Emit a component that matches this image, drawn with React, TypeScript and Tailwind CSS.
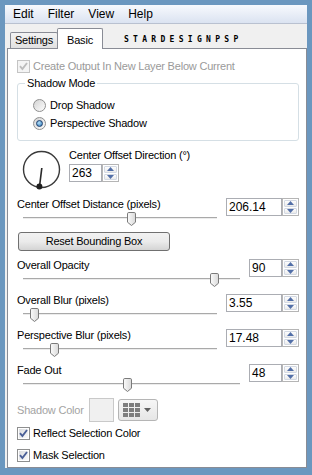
import React from "react";

type SliderRow = {
  label: string;
  value: string;
  pos: number;
  narrow?: boolean;
  gap: string;
};

const rows: SliderRow[] = [
  { label: "Overall Opacity", value: "90", pos: 0.91, narrow: true, gap: "mt-[7px]" },
  { label: "Overall Blur (pixels)", value: "3.55", pos: 0.035, gap: "mt-[7px]" },
  { label: "Perspective Blur (pixels)", value: "17.48", pos: 0.145, gap: "mt-[7px]" },
  { label: "Fade Out", value: "48", pos: 0.485, narrow: true, gap: "mt-[7px]" },
];

function CheckBox({ disabled }: { disabled?: boolean }) {
  return (
    <span
      className={`flex h-[13px] w-[13px] shrink-0 items-center justify-center border p-[1px] ${
        disabled ? "border-[#c4c4c4] bg-[#f4f4f4]" : "border-[#8e8f8f] bg-white"
      }`}
    >
      <span
        className={`flex h-full w-full items-center justify-center ${
          disabled ? "bg-[#f4f4f4]" : "bg-gradient-to-br from-[#d9dbde] to-[#fbfbfb]"
        }`}
      >
        <svg width="9" height="9" viewBox="0 0 9 9">
          <path
            d="M1 4.2 L3.4 7 L8 1"
            stroke={disabled ? "#bcbcbc" : "#4a5f97"}
            strokeWidth="1.9"
            fill="none"
          />
        </svg>
      </span>
    </span>
  );
}

function Radio({ checked }: { checked?: boolean }) {
  return (
    <span className="flex h-[13px] w-[13px] shrink-0 items-center justify-center rounded-full border border-[#8f8f8f] bg-gradient-to-br from-[#d4d4d4] to-[#fdfdfd]">
      {checked && (
        <span className="h-[7px] w-[7px] rounded-full border border-[#1d3f6e] bg-[radial-gradient(circle_at_40%_35%,#b5e2fb,#2a74b4)]" />
      )}
    </span>
  );
}

function Spin() {
  return (
    <div className="flex w-[17px] flex-col gap-[1px] border border-[#b5b5b5] bg-white p-[1px]">
      <div className="flex flex-1 items-center justify-center rounded-[1px] border border-[#d3d9e3] bg-gradient-to-b from-[#fdfdfd] to-[#ebebeb]">
        <svg width="7" height="4" viewBox="0 0 7 4">
          <path d="M0 4 L3.5 0 L7 4Z" fill="#526fa8" />
        </svg>
      </div>
      <div className="flex flex-1 items-center justify-center rounded-[1px] border border-[#d3d9e3] bg-gradient-to-b from-[#fdfdfd] to-[#ebebeb]">
        <svg width="7" height="4" viewBox="0 0 7 4">
          <path d="M0 0 L3.5 4 L7 0Z" fill="#526fa8" />
        </svg>
      </div>
    </div>
  );
}

function NumBox({ value, narrow }: { value: string; narrow?: boolean }) {
  return (
    <div className="flex h-[18px]">
      <div
        className={`flex items-center border border-[#abadb3] bg-white pl-[2px] text-[12px] tracking-normal text-black ${
          narrow ? "w-[33px]" : "w-[56px]"
        }`}
      >
        {value}
      </div>
      <Spin />
    </div>
  );
}

function Thumb() {
  return (
    <svg width="9" height="14" viewBox="0 0 9 14">
      <defs>
        <linearGradient id="thumbfill" x1="0" y1="0" x2="1" y2="0">
          <stop offset="0" stopColor="#fbfbfb" />
          <stop offset="1" stopColor="#d9d9d9" />
        </linearGradient>
      </defs>
      <path
        d="M1.8 0.5 H7.2 Q8.5 0.5 8.5 1.8 V10.2 L4.5 13.5 L0.5 10.2 V1.8 Q0.5 0.5 1.8 0.5Z"
        fill="url(#thumbfill)"
        stroke="#7a7a7a"
      />
    </svg>
  );
}

function Slider({ pos }: { pos: number }) {
  return (
    <div className="relative h-[14px] pl-[6px] pr-[9px]">
      <div className="mt-[6px] h-[2px] border-t border-b border-t-[#a9a9a9] border-b-[#ececec]" />
      <div className="absolute top-[1px]" style={{ left: 6 + pos * 187 }}>
        <Thumb />
      </div>
    </div>
  );
}

function Control({ label, value, pos, narrow, gap }: SliderRow) {
  return (
    <div className={`ml-[9px] flex w-[282px] ${gap}`}>
      <div className="flex flex-1 flex-col">
        <div className="flex h-[14px] items-center">{label}</div>
        <Slider pos={narrow ? pos * 1.1 : pos} />
      </div>
      <div className="mt-[1px]">
        <NumBox value={value} narrow={narrow} />
      </div>
    </div>
  );
}

function Dial() {
  return (
    <svg width="40" height="40" viewBox="0 0 40 40" className="mt-[2px] shrink-0">
      <circle cx="19.5" cy="19.5" r="18" fill="none" stroke="#3a3a3a" strokeWidth="1.4" />
      <line x1="19.8" y1="18" x2="17.5" y2="36.5" stroke="#2a2a2a" strokeWidth="1.6" />
      <circle cx="17.4" cy="36.6" r="3" fill="#1f1f1f" />
    </svg>
  );
}

function GridIcon() {
  return (
    <svg width="17" height="14" viewBox="0 0 17 14">
      {[0, 1, 2].map((r) =>
        [0, 1, 2].map((c) => (
          <rect key={`${r}-${c}`} x={c * 6} y={r * 5} width="5" height="4" fill="#7d7d7d" />
        ))
      )}
    </svg>
  );
}

export default function App() {
  return (
    <div className="h-[475px] w-[312px] bg-[#6b97bf] pb-[7px] pl-[5px] pr-[5px] pt-[5px] font-['Liberation_Sans',Arial,sans-serif] text-[11px] tracking-[-0.2px] text-black">
      <div className="flex h-full flex-col bg-[#f0f0f0]">
        {/* menu */}
        <div className="flex h-[19px] items-center border-b border-[#b9c1d0] bg-gradient-to-b from-[#f7f9fd] to-[#dbe3f1] pl-[1px] text-[12px] tracking-normal">
          <span className="px-[7px]">Edit</span>
          <span className="px-[7px]">Filter</span>
          <span className="px-[7px]">View</span>
          <span className="px-[7px]">Help</span>
        </div>

        {/* tabs */}
        <div className="flex h-[24px] items-end pl-[5px]">
          <div className="flex h-[16px] w-[48px] items-center justify-center rounded-t-[2px] border border-b-0 border-[#898c95] bg-gradient-to-b from-[#f3f3f3] to-[#e1e1e1]">
            Settings
          </div>
          <div className="relative z-10 -mb-[1px] -ml-[1px] flex h-[21px] w-[46px] items-start justify-center rounded-t-[2px] border border-b-0 border-[#898c95] bg-white pt-[3px]">
            Basic
          </div>
          <div className="mb-[4px] ml-[21px] font-['DejaVu_Sans_Mono',monospace] text-[8px] font-bold leading-none tracking-[4.3px]">
            STARDESIGNPSP
          </div>
        </div>

        {/* panel */}
        <div className="ml-[2px] flex flex-1 flex-col border border-[#898c95] bg-white pt-[10px]">
          <div className="ml-[9px] flex h-[15px] items-center gap-[3px] text-[#9a9a9a]">
            <CheckBox disabled />
            <span>Create Output In New Layer Below Current</span>
          </div>

          <fieldset className="ml-[9px] mt-[2px] w-[282px] rounded-[3px] border border-[#d5dfe5] pb-[9px]">
            <legend className="ml-[7px] h-[14px] px-[2px] leading-[14px]">Shadow Mode</legend>
            <div className="mt-[7px] flex flex-col gap-[2px] pl-[15px]">
              <div className="flex h-[16px] items-center gap-[4px]">
                <Radio />
                <span>Drop Shadow</span>
              </div>
              <div className="flex h-[16px] items-center gap-[4px]">
                <Radio checked />
                <span>Perspective Shadow</span>
              </div>
            </div>
          </fieldset>

          <div className="ml-[14px] mt-[7px] flex gap-[7px]">
            <Dial />
            <div className="flex flex-col">
              <div className="flex h-[14px] items-center">Center Offset Direction (°)</div>
              <div className="mt-[2px] flex h-[18px]">
                <div className="flex w-[33px] items-center border border-[#abadb3] bg-white pl-[2px] text-[12px] tracking-normal">
                  263
                </div>
                <Spin />
              </div>
            </div>
          </div>

          <Control label="Center Offset Distance (pixels)" value="206.14" pos={0.555} gap="mt-[7px]" />

          <button className="ml-[10px] mt-[7px] flex h-[19px] w-[152px] items-center justify-center rounded-[3px] border border-[#707070] bg-gradient-to-b from-[#f2f2f2] via-[#ebebeb] to-[#d4d4d4] text-[11px]">
            Reset Bounding Box
          </button>

          {rows.map((r) => (
            <Control key={r.label} {...r} />
          ))}

          <div className="ml-[9px] mt-[7px] flex h-[24px] items-center">
            <span className="w-[72px] text-[#a3a3a3]">Shadow Color</span>
            <div className="h-[24px] w-[25px] border border-[#c9c9c9] bg-[#f0f0f0]" />
            <div className="ml-[4px] flex h-[22px] w-[40px] items-center gap-[4px] rounded-[3px] border border-[#b5b5b5] bg-gradient-to-b from-[#f6f6f6] to-[#e6e6e6] pl-[4px]">
              <GridIcon />
              <svg width="7" height="4" viewBox="0 0 7 4">
                <path d="M0 0 L3.5 4 L7 0Z" fill="#606060" />
              </svg>
            </div>
          </div>

          <div className="ml-[9px] mt-[4px] flex h-[15px] items-center gap-[3px]">
            <CheckBox />
            <span>Reflect Selection Color</span>
          </div>
          <div className="ml-[9px] mt-[7px] flex h-[15px] items-center gap-[3px]">
            <CheckBox />
            <span>Mask Selection</span>
          </div>
        </div>
      </div>
    </div>
  );
}
